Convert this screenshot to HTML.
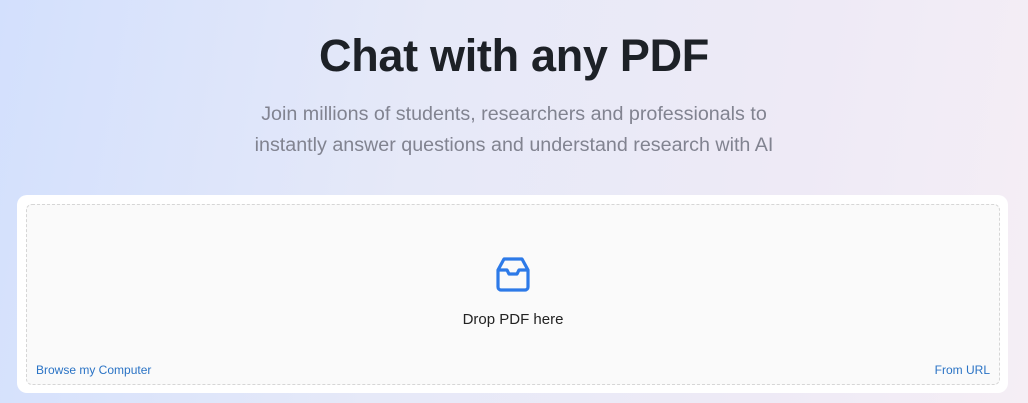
<!DOCTYPE html><html><head><style>
body{margin:0;width:1028px;height:403px;overflow:hidden;font-family:"Liberation Sans",sans-serif;background:linear-gradient(100deg,#d3e0fd 0%,#e6e9f8 40%,#eeeaf6 75%,#f5eef5 100%);position:relative}
h1{position:absolute;top:30px;left:0;width:1028px;text-align:center;margin:0;font-size:45px;font-weight:bold;color:#1d2127;letter-spacing:-0.3px}
.sub{position:absolute;top:99px;left:0;width:1028px;text-align:center;font-size:19.7px;line-height:31px;color:#818390}
.card{position:absolute;left:17px;top:195px;width:991px;height:198px;background:#fff;border-radius:10px}
.in{position:absolute;left:9px;top:9px;width:972px;height:179px;background:#fafafa;border:1px dashed #d6d6d6;border-radius:6px}
.drop{position:absolute;top:106px;width:100%;text-align:center;font-size:15px;color:#222}
.l{position:absolute;bottom:7px;font-size:12px;color:#2a73c5}
</style></head><body>
<h1>Chat with any PDF</h1>
<div class="sub">Join millions of students, researchers and professionals to<br>instantly answer questions and understand research with AI</div>
<div class="card"><div class="in">
<svg style="position:absolute;left:468px;top:51px" width="36" height="37" viewBox="0 0 36 37" fill="none" stroke="#2d7ae8" stroke-width="3.2" stroke-linejoin="round"><path d="M9 3h18l6 11v17a3 3 0 0 1-3 3H6a3 3 0 0 1-3-3V14z"/><path d="M3 14h9l2 4h8l2-4h9"/></svg>
<div class="drop">Drop PDF here</div>
<div class="l" style="left:9px">Browse my Computer</div>
<div class="l" style="right:9px">From URL</div>
</div></div>
</body></html>
